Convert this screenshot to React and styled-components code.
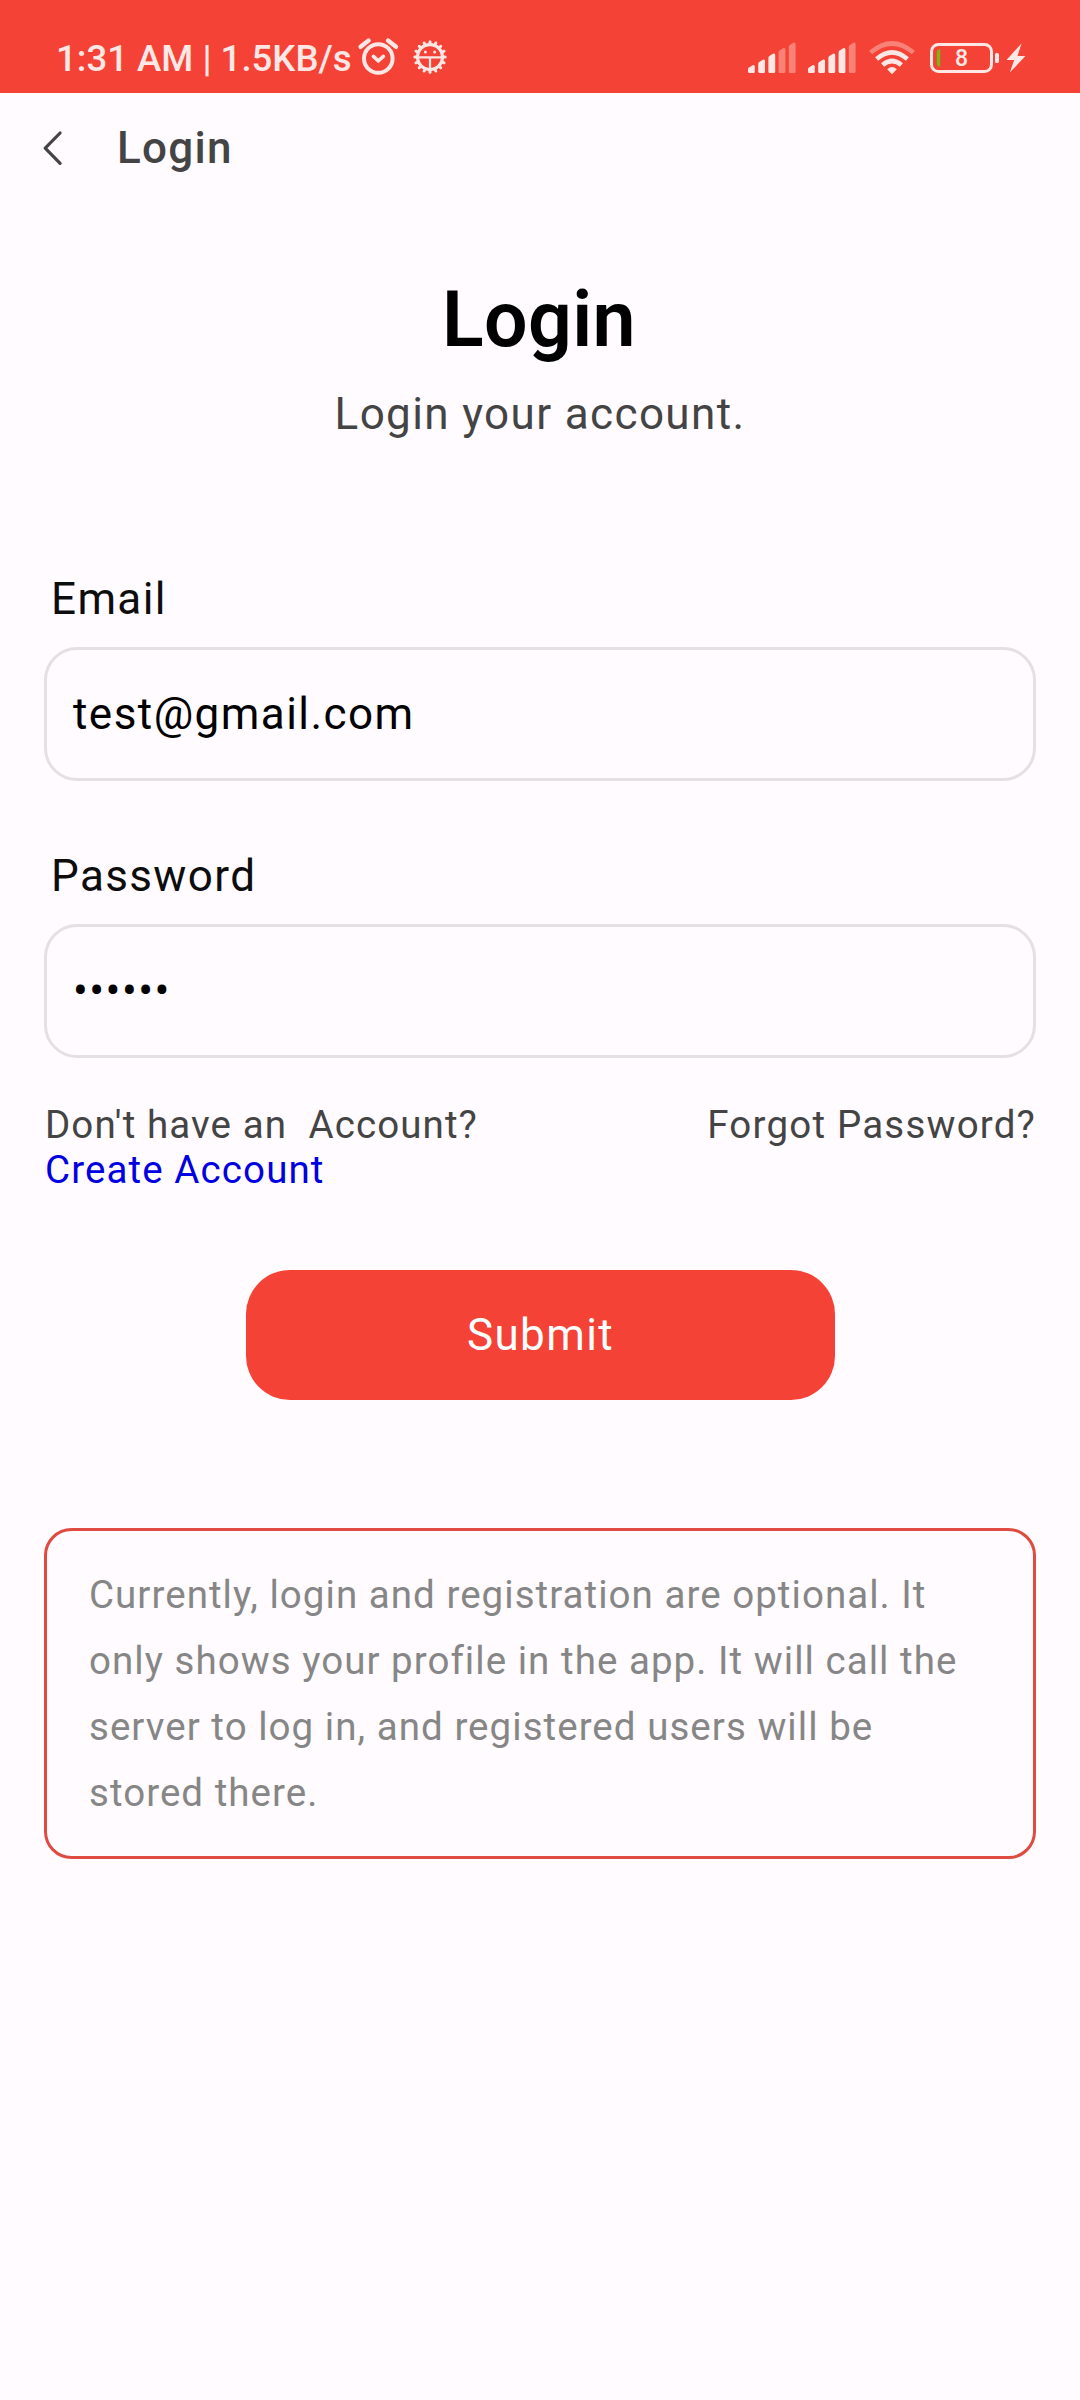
import React, { useState } from "react";
import styled, { createGlobalStyle } from "styled-components";

const GlobalStyle = createGlobalStyle`
  *, *::before, *::after { box-sizing: border-box; }
  body {
    margin: 0;
    background: #fffbff;
    font-family: Roboto, "Liberation Sans", sans-serif;
  }
`;

const Screen = styled.div`
  width: 1080px;
  min-height: 2400px;
  display: flex;
  flex-direction: column;
  background: #fffbff;
`;

const StatusBar = styled.header`
  height: 93px;
  padding: 22px 54px 0 56px;
  display: flex;
  justify-content: space-between;
  align-items: center;
  background: #f44336;
  color: #ffe7e5;
`;

const StatusGroup = styled.div`
  display: flex;
  align-items: center;
`;

const StatusText = styled.span`
  padding-top: 3px;
  font-size: 36.6px;
  font-weight: 500;
  line-height: 42px;
  white-space: pre;
`;

const Glyph = styled.svg`
  display: block;
  flex: none;
  overflow: visible;
  margin-left: ${(p) => p.$gap || 0}px;
`;

const BatteryLabel = styled.span`
  width: 63px;
  margin-left: -69px;
  margin-right: 6px;
  padding-top: 2px;
  text-align: center;
  font-size: 23px;
  font-weight: 500;
  line-height: 28px;
`;

const AppBar = styled.nav`
  height: 111px;
  padding: 0 0 1px 42px;
  display: flex;
  align-items: center;
`;

const BackButton = styled.button`
  width: 24px;
  height: 36px;
  margin: 0 51px 0 0;
  padding: 0;
  border: 0;
  background: none;
`;

const AppBarTitle = styled.span`
  font-size: 44px;
  font-weight: 500;
  line-height: 52px;
  letter-spacing: 1.3px;
  color: #444444;
`;

const Content = styled.main`
  padding: 71px 44px 0;
  display: flex;
  flex-direction: column;
`;

const Heading = styled.h1`
  margin: 0;
  padding-right: 2px;
  text-align: center;
  font-size: 77px;
  font-weight: 600;
  line-height: 90px;
  letter-spacing: 0.4px;
  color: #000000;
`;

const Subheading = styled.p`
  margin: 23px 0 0;
  text-align: center;
  font-size: 44px;
  line-height: 52px;
  letter-spacing: 1.375px;
  color: #444444;
`;

const Field = styled.label`
  margin-top: ${(p) => p.$gap}px;
  display: flex;
  flex-direction: column;
  gap: 22px;
`;

const FieldLabel = styled.span`
  padding-left: 7px;
  font-size: 44px;
  line-height: 52px;
  letter-spacing: 1.375px;
  color: #0d0d0d;
`;

const FieldBox = styled.div`
  height: 134px;
  padding: 0 26px;
  display: flex;
  align-items: center;
  border: 3px solid #e3e1e3;
  border-radius: 33px;
  font-size: 44px;
  line-height: 52px;
  letter-spacing: 1.45px;
  color: #000000;
`;

const LinksRow = styled.div`
  margin-top: 44px;
  padding-left: 1px;
  display: flex;
  justify-content: space-between;
  align-items: flex-start;
  font-size: 38.5px;
  line-height: 45px;
  letter-spacing: 1.1px;
  color: #444444;
  white-space: pre;
`;

const SignUp = styled.div`
  display: flex;
  flex-direction: column;
`;

const CreateLink = styled.a`
  color: #0000e0;
`;

const ForgotLink = styled.a`
  letter-spacing: 1.2px;
`;

const SubmitButton = styled.button`
  align-self: center;
  width: 589px;
  height: 130px;
  margin-top: 78px;
  padding: 0 0 0 1px;
  border: 0;
  border-radius: 44px;
  background: #f44336;
  color: #ffffff;
  font-family: inherit;
  font-size: 44px;
  line-height: 52px;
  letter-spacing: 1.375px;
`;

const Notice = styled.p`
  height: 331px;
  margin: 128px 0 0;
  padding: 31px 41px 29px 42px;
  border: 3px solid #df4b40;
  border-radius: 27.5px;
  font-size: 38.5px;
  line-height: 66px;
  letter-spacing: 1.04px;
  color: #868686;
`;

const AlarmIcon = () => (
  <Glyph width="40" height="38" viewBox="358 39 40 38" fill="none" stroke="currentColor" $gap={6}>
    <circle cx="378.3" cy="58.5" r="14.3" strokeWidth="4" />
    <path d="M360.6 46.8 368.6 40.6M396 46.8 388 40.6" strokeWidth="4.4" strokeLinecap="round" />
    <path d="M373.4 56.4 378.3 60.8 383.4 56.4" strokeWidth="3.6" strokeLinecap="round" />
  </Glyph>
);

const teeth = Array.from({ length: 16 }, (_, i) => (i * 360) / 16);

const BugIcon = () => (
  <Glyph width="34" height="34" viewBox="-17 -16 34 34" fill="none" stroke="currentColor" $gap={15}>
    <circle r="12.4" strokeWidth="3.2" />
    {teeth.map((a) => (
      <path key={a} d="M0 -13V-15.2" strokeWidth="3" strokeLinecap="round" transform={`rotate(${a})`} />
    ))}
    <path d="M-12 0.400H12M0 0.400V12" strokeWidth="2.2" />
    <circle cx="-4.6" cy="-5" r="1.5" fill="currentColor" stroke="none" />
    <circle cx="4.6" cy="-5" r="1.5" fill="currentColor" stroke="none" />
  </Glyph>
);

const bars = [23, 17.5, 11.5, 6, 0.5];

const SignalIcon = ({ level, gap }) => (
  <Glyph width="48" height="31" viewBox="0 0 48 31" fill="currentColor" $gap={gap}>
    {bars.map((top, i) => (
      <path
        key={top}
        opacity={i < level ? 1 : 0.38}
        d={`M${i * 10.2} ${top + 4}Q${i * 10.2} ${top + 3} ${i * 10.2 + 1} ${top + 2.4}L${i * 10.2 + 5} ${top}Q${i * 10.2 + 6.8} ${top - 0.4} ${i * 10.2 + 6.8} ${top + 1.5}V29.5Q${i * 10.2 + 6.8} 31 ${i * 10.2 + 5.4} 31H${i * 10.2 + 1.4}Q${i * 10.2} 31 ${i * 10.2} 29.5Z`}
      />
    ))}
  </Glyph>
);

const WifiIcon = () => (
  <Glyph width="46" height="33" viewBox="0 0 46 33" fill="none" stroke="currentColor" strokeWidth="4.6" $gap={13}>
    <path d="M1.6 11.6Q23 -6.6 44.4 11.6" opacity="0.38" />
    <path d="M7.6 18Q23 4.6 38.4 18" />
    <path d="M13.6 24Q23 16 32.4 24" />
    <path d="M18.2 28.2Q23 24 27.8 28.2L24 32.2Q23 33.2 22 32.2Z" fill="currentColor" stroke="none" />
  </Glyph>
);

const BatteryIcon = () => (
  <Glyph width="69" height="30" viewBox="0 0 69 30" fill="none" stroke="currentColor" $gap={15}>
    <rect x="1.5" y="1.5" width="60" height="27" rx="7" strokeWidth="3" />
    <path d="M10.2 6V24Q6.8 23.5 6.8 20V10Q6.8 6.500 10.2 6Z" fill="#7cb518" stroke="none" />
    <rect x="65" y="10" width="4" height="10" rx="1.6" fill="currentColor" stroke="none" />
  </Glyph>
);

const BoltIcon = () => (
  <Glyph width="20" height="30" viewBox="0 0 20 30" fill="currentColor" $gap={7}>
    <path d="M15.500 0.500 0.500 17H8.200L3.800 29.500 19.500 13H11.500Z" />
  </Glyph>
);

const BackIcon = () => (
  <svg width="24" height="36" viewBox="0 0 24 36" fill="none" stroke="#444444" strokeWidth="3.2" strokeLinecap="round" strokeLinejoin="round">
    <path d="M18.100 3 3.200 18.200 18.100 33.400" />
  </svg>
);

export default function App() {
  const [email] = useState("test@gmail.com");
  const [password] = useState("secret");

  return (
    <>
      <GlobalStyle />
      <Screen>
        <StatusBar>
          <StatusGroup>
            <StatusText>1:31 AM | 1.5KB/s</StatusText>
            <AlarmIcon />
            <BugIcon />
          </StatusGroup>
          <StatusGroup>
            <SignalIcon level={3} />
            <SignalIcon level={4} gap={12} />
            <WifiIcon />
            <BatteryIcon />
            <BatteryLabel>8</BatteryLabel>
            <BoltIcon />
          </StatusGroup>
        </StatusBar>
        <AppBar>
          <BackButton aria-label="Back">
            <BackIcon />
          </BackButton>
          <AppBarTitle>Login</AppBarTitle>
        </AppBar>
        <Content>
          <Heading>Login</Heading>
          <Subheading>Login your account.</Subheading>
          <Field $gap={133}>
            <FieldLabel>Email</FieldLabel>
            <FieldBox>{email}</FieldBox>
          </Field>
          <Field $gap={69}>
            <FieldLabel>Password</FieldLabel>
            <FieldBox>{"•".repeat(password.length)}</FieldBox>
          </Field>
          <LinksRow>
            <SignUp>
              <span>{"Don't have an  Account?"}</span>
              <CreateLink>Create Account</CreateLink>
            </SignUp>
            <ForgotLink>Forgot Password?</ForgotLink>
          </LinksRow>
          <SubmitButton>Submit</SubmitButton>
          <Notice>
            Currently, login and registration are optional. It only shows your profile in the app. It will
            call the server to log in, and registered users will be stored there.
          </Notice>
        </Content>
      </Screen>
    </>
  );
}
